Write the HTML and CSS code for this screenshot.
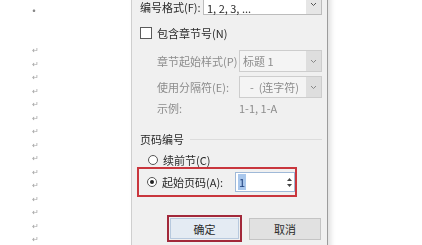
FILE: index.html
```html
<!DOCTYPE html>
<html lang="zh-CN">
<head>
  <meta charset="UTF-8">
  <title>页码格式</title>
  <link rel="stylesheet" href="styles.css">
</head>
<body>
  <div class="page">
    <!-- document behind the dialog -->
    <div class="doc">
      <span class="dot">·</span>
      <div class="marks">
        <span>↵</span><span>↵</span><span>↵</span><span>↵</span><span>↵</span>
        <span>↵</span><span>↵</span><span>↵</span><span>↵</span><span>↵</span>
        <span>↵</span><span>↵</span><span>↵</span><span>↵</span><span>↵</span>
      </div>
    </div>

    <!-- page number format dialog -->
    <div class="dialog">
      <div class="row row-format">
        <span class="label w-format">编号格式(F):</span>
        <div class="select">
          <span class="select-text">1, 2, 3, ...</span>
          <span class="arrow"><svg width="7" height="5" viewBox="0 0 7 5"><polyline points="1,1 3.5,3.5 6,1" fill="none" stroke="#555" stroke-width="1"/></svg></span>
        </div>
      </div>

      <div class="row row-check">
        <span class="checkbox"></span>
        <span class="label">包含章节号(N)</span>
      </div>

      <div class="row row-sub row-style">
        <span class="label disabled w-sub">章节起始样式(P)</span>
        <div class="select is-disabled">
          <span class="select-text">标题 1</span>
          <span class="arrow"><svg width="7" height="5" viewBox="0 0 7 5"><polyline points="1,1 3.5,3.5 6,1" fill="none" stroke="#888" stroke-width="1"/></svg></span>
        </div>
      </div>

      <div class="row row-sub row-sep">
        <span class="label disabled w-sub">使用分隔符(E):</span>
        <div class="select is-disabled">
          <span class="select-text center">-&nbsp;&nbsp;(连字符)</span>
          <span class="arrow"><svg width="7" height="5" viewBox="0 0 7 5"><polyline points="1,1 3.5,3.5 6,1" fill="none" stroke="#888" stroke-width="1"/></svg></span>
        </div>
      </div>

      <div class="row row-sub row-example">
        <span class="label disabled w-sub">示例:</span>
        <span class="label disabled">1-1, 1-A</span>
      </div>

      <div class="row group-head">
        <span class="label">页码编号</span>
        <span class="rule"></span>
      </div>

      <div class="row row-radio">
        <span class="radio"></span>
        <span class="label">续前节(C)</span>
      </div>

      <div class="highlight start-box">
        <span class="radio checked"></span>
        <span class="label w-start">起始页码(A):</span>
        <div class="spin">
          <span class="spin-text"><span class="sel">1</span></span>
          <span class="spin-btns">
            <svg width="5" height="3" viewBox="0 0 5 3"><polygon points="0,3 2.5,0 5,3" fill="#444"/></svg>
            <svg width="5" height="3" viewBox="0 0 5 3"><polygon points="0,0 2.5,3 5,0" fill="#444"/></svg>
          </span>
        </div>
      </div>

      <div class="row buttons">
        <div class="highlight ok-box">
          <button class="btn btn-default">确定</button>
        </div>
        <button class="btn">取消</button>
      </div>
    </div>
  </div>
</body>
</html>
```

FILE: styles.css
```css
html, body {
  margin: 0;
  padding: 0;
  background: #fff;
  overflow: hidden;
}
body {
  font-family: "Noto Sans CJK SC", "Noto Sans", sans-serif;
  font-size: 11px;
  color: #2a2a2a;
}

.page {
  display: flex;
  width: 422px;
  height: 245px;
  overflow: hidden;
  filter: blur(0.3px);
}

/* document side */
.doc {
  width: 131px;
  flex: none;
  position: relative;
}
.dot {
  position: absolute;
  left: 28px;
  top: 2px;
  font-size: 12px;
  color: #888;
}
.marks {
  display: flex;
  flex-direction: column;
  padding: 43px 0 0 32px;
}
.marks span {
  height: 13.5px;
  line-height: 13.5px;
  font-size: 8px;
  color: #a0a0a0;
}

/* dialog */
.dialog {
  width: 197px;
  height: 262px;
  flex: none;
  box-sizing: border-box;
  margin-top: -7px;
  padding: 0 5px 0 8px;
  background: #f0f0f0;
  border-left: 1px solid #cfcfcf;
  border-right: 1px solid #9c9c9c;
  box-shadow: 3px 0 5px rgba(0, 0, 0, 0.12);
}
.row {
  display: flex;
  align-items: center;
  white-space: nowrap;
}
.label {
  line-height: 14px;
}
.disabled {
  color: #8c8c8c;
}
.w-format { width: 63px; flex: none; }
.w-sub { width: 82px; flex: none; }

.row-format {
  height: 22px;
  align-items: flex-end;
}
.row-format .label {
  padding-bottom: 1px;
}
.row-format .select-text {
  padding-top: 8px;
  line-height: 12px;
}
.row-check { height: 22px; margin-top: 7px; }
.row-sub { padding-left: 17px; }
.row-style { height: 22px; margin-top: 6px; }
.row-sep { height: 22px; margin-top: 4px; }
.row-example { height: 16px; margin-top: 2px; }

.select {
  flex: 1;
  height: 22px;
  box-sizing: border-box;
  display: flex;
  align-items: center;
  background: #fff;
  border: 1px solid #bcbcbc;
}
.select.is-disabled {
  background: #f4f4f4;
  border-color: #cdcdcd;
  color: #8c8c8c;
}
.select-text {
  flex: 1;
  padding-left: 3px;
}
.select-text.center {
  text-align: center;
}
.arrow {
  width: 15px;
  height: 20px;
  display: flex;
  align-items: center;
  justify-content: center;
  background: #e6e6e6;
}
.is-disabled .arrow {
  background: #dedede;
}

.checkbox {
  width: 10px;
  height: 10px;
  margin-right: 5px;
  background: #fff;
  border: 1px solid #5a5a5a;
}

.group-head {
  height: 16px;
  margin-top: 15px;
}
.rule {
  flex: 1;
  height: 1px;
  margin-left: 6px;
  background: #dcdcdc;
}

.radio {
  width: 10px;
  height: 10px;
  flex: none;
  border: 1px solid #555;
  border-radius: 50%;
  background: #fff;
  margin-right: 5px;
  box-sizing: border-box;
  display: flex;
  align-items: center;
  justify-content: center;
}
.radio.checked::after {
  content: "";
  width: 4px;
  height: 4px;
  border-radius: 50%;
  background: #222;
}
.row-radio {
  height: 13px;
  margin-top: 6px;
  padding-left: 8px;
}

.highlight {
  border: 2px solid #c9363d;
  box-sizing: border-box;
}
.start-box {
  display: flex;
  align-items: center;
  width: 160px;
  height: 30px;
  margin: 1px 0 0 -3px;
  padding-left: 8px;
}
.w-start { width: 73px; flex: none; }
.spin {
  width: 60px;
  height: 20px;
  box-sizing: border-box;
  display: flex;
  align-items: center;
  background: #fff;
  border: 1px solid #9fb9d8;
}
.spin-text {
  flex: 1;
  padding-left: 2px;
}
.sel {
  background: #a9c7ec;
  color: #1c3d7a;
  padding: 0 1px;
}
.spin-btns {
  width: 10px;
  display: flex;
  flex-direction: column;
  align-items: center;
  gap: 3px;
}

.buttons {
  margin-top: 18px;
  padding-left: 27px;
  gap: 7px;
}
.ok-box {
  width: 75px;
  height: 27px;
  border-color: #a2283a;
  padding: 1px;
}
.btn {
  font-family: inherit;
  font-size: 11px;
  color: #2a2a2a;
  height: 22px;
  width: 72px;
  padding: 0;
  background: #e1e1e1;
  border: 1px solid #c4c4c4;
}
.btn-default {
  width: 100%;
  height: 100%;
  background: #e4ebf3;
  border-color: #b7c9de;
}
```
